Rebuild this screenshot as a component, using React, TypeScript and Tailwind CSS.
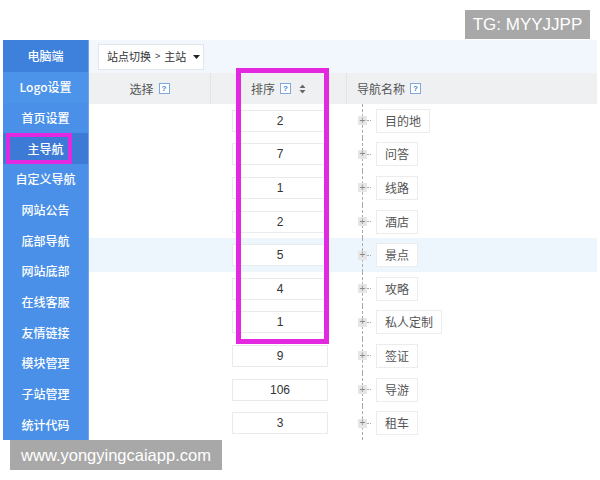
import React from "react";

const menu = ["Logo设置", "首页设置", "主导航", "自定义导航", "网站公告", "底部导航", "网站底部", "在线客服", "友情链接", "模块管理", "子站管理", "统计代码"];

const rows: { sort: string; name: string }[] = [
  { sort: "2", name: "目的地" },
  { sort: "7", name: "问答" },
  { sort: "1", name: "线路" },
  { sort: "2", name: "酒店" },
  { sort: "5", name: "景点" },
  { sort: "4", name: "攻略" },
  { sort: "1", name: "私人定制" },
  { sort: "9", name: "签证" },
  { sort: "106", name: "导游" },
  { sort: "3", name: "租车" },
];

const cjk = { fontFamily: '"Noto Sans CJK SC", "Noto Sans", sans-serif' };
const latin = { fontFamily: '"Liberation Sans", sans-serif' };

function Help() {
  return (
    <span className="ml-[5px] inline-flex h-[11px] w-[11px] shrink-0 items-center justify-center border border-[#7fa9dc] bg-white text-[8px] font-bold leading-none text-[#3f7fd0]" style={latin}>
      ?
    </span>
  );
}

function Plus() {
  return (
    <span className="-ml-[5px] flex h-[9px] w-[9px] items-center justify-center bg-[#e6e6e6] text-[10px] leading-none text-[#888]" style={latin}>
      +
    </span>
  );
}

export default function App() {
  return (
    <div className="relative h-[480px] w-[600px] overflow-hidden bg-white text-[12px] text-[#555]" style={cjk}>
      <div className="h-[40px]" />
      <div className="ml-[3px] flex w-[594px]">
        {/* sidebar */}
        <div className="flex w-[86px] flex-col border-r border-[#6aa5ee] bg-[#4a90e8] text-white">
          <div className="flex h-[32px] items-center justify-center bg-[#3d81dc] text-[12px] font-medium">电脑端</div>
          {menu.map((m) => (
            <div
              key={m}
              className={`flex h-[30.67px] items-center justify-center text-[12px] font-medium ${m === "主导航" ? "bg-[#3c7ad5]" : m === "Logo设置" ? "bg-[#4c93ea]" : ""}`}
            >
              {m}
            </div>
          ))}
        </div>

        {/* main */}
        <div className="flex flex-1 flex-col">
          <div className="flex h-[33px] items-center bg-[#f2f7fd] pl-[9px]">
            <div className="flex h-[26px] w-[106px] shrink-0 items-center whitespace-nowrap border border-[#e2e5e9] bg-white pl-[8px] text-[11px] text-[#333]">
              站点切换<span className="mx-[4px] text-[9px]" style={latin}>&gt;</span>主站
              <svg className="ml-[7px] shrink-0" width="7" height="4" viewBox="0 0 7 4">
                <path d="M0 0 L7 0 L3.5 4 Z" fill="#222" />
              </svg>
            </div>
          </div>

          <div className="flex h-[31px] bg-[#eef0f2] text-[#555]">
            <div className="flex w-[122px] items-center justify-center border-r border-[#e2e4e7]">
              选择<Help />
            </div>
            <div className="flex w-[136px] items-center justify-center border-r border-[#e2e4e7]">
              排序<Help />
              <svg className="ml-[8px]" width="7" height="10" viewBox="0 0 7 10">
                <path d="M3.5 0.5 L6.5 4 L0.5 4 Z" fill="#666" />
                <path d="M3.5 9.5 L6.5 6 L0.5 6 Z" fill="#666" />
              </svg>
            </div>
            <div className="flex flex-1 items-center pl-[10px]">
              导航名称<Help />
            </div>
          </div>

          {rows.map((r, i) => (
            <div key={i} className={`flex h-[33.6px] ${i === 4 ? "bg-[#eef6fd]" : ""}`}>
              <div className="w-[123px]" />
              <div className="flex w-[136px] items-center pl-[20px]">
                <div className="flex h-[22px] w-[96px] items-center justify-center border border-[#e8eaec] bg-white text-[12px] text-[#333]" style={latin}>
                  {r.sort}
                </div>
              </div>
              <div className="flex-1 pl-[14px]">
                <div className="flex h-full items-center border-l border-dashed border-[#aaa]">
                  <Plus />
                  <span className="w-[4px] border-t border-dotted border-[#aaa]" />
                  <div className="ml-[5px] flex h-[24px] items-center border border-[#ececec] bg-white px-[8px] text-[12px] text-[#555]">
                    {r.name}
                  </div>
                </div>
              </div>
            </div>
          ))}
        </div>
      </div>

      {/* overlays */}
      <div className="absolute left-[6px] top-[133px] h-[31px] w-[66px] border-[4px] border-[#e229e0]" />
      <div className="absolute left-[236px] top-[68px] h-[276px] w-[93px] border-[5px] border-[#e229e0]" />
      <div className="absolute left-[465px] top-[10px] flex h-[29px] w-[125px] items-center justify-center bg-[#a8a8a8] text-[17px] text-white" style={latin}>
        TG: MYYJJPP
      </div>
      <div className="absolute left-[10px] top-[440px] flex h-[30px] w-[212px] items-center justify-center bg-[#a8a8a8] text-[16.5px] text-white" style={latin}>
        www.yongyingcaiapp.com
      </div>
    </div>
  );
}
